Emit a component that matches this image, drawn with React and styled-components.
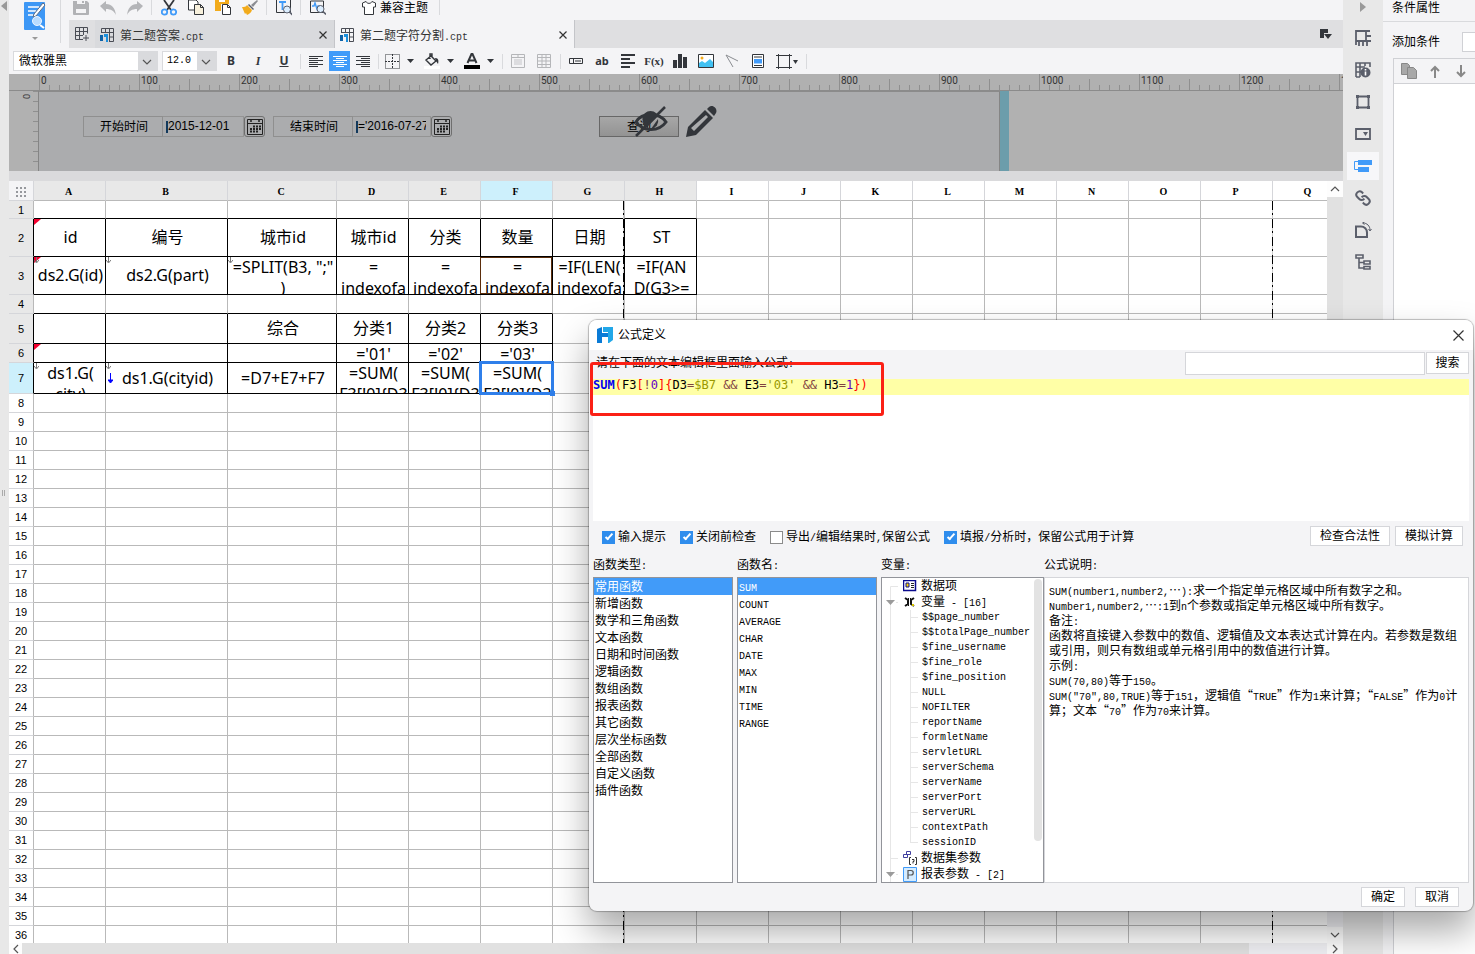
import React from "react";
import styled, { createGlobalStyle, css } from "styled-components";

const UI_FONT = `"Liberation Sans", "Noto Sans CJK SC", sans-serif`;
const CJK_FONT = `"Noto Sans CJK SC", sans-serif`;
const CELL_FONT = `"Noto Sans", "Noto Sans CJK SC", sans-serif`;
const MONO = `"Liberation Mono", "Noto Sans CJK SC", monospace`;
const INK = "#33363b";
const BLUE = "#419bf9";

const Global = createGlobalStyle`
  *, *::before, *::after { box-sizing: border-box; }
  body { margin: 0; font: 12px/16px ${UI_FONT}; color: #000; background: #f4f4f6; overflow: hidden; }
  button, input, select { font: inherit; color: inherit; margin: 0; }
  ul { list-style: none; margin: 0; padding: 0; }
  svg { display: block; }
`;

/* ---------- text helper: Latin runs use a half-width face ---------- */
const Latin = styled.span`
  font-family: ${MONO};
  font-size: 10px;
  line-height: 0;
  white-space: pre;
`;
const Mixed = ({ children }) =>
  String(children)
    .split(/([\x20-\x7e]+)/)
    .filter(Boolean)
    .map((part, i) => (/^[\x20-\x7e]/.test(part) ? <Latin key={i}>{part}</Latin> : part));

/* ---------- frame ---------- */
const Page = styled.div`
  display: flex;
  height: 100vh;
  position: relative;
  overflow: hidden;
`;
const Gutter = styled.aside`
  flex: 0 0 9px;
  background: #e8e8e8;
  display: flex;
  flex-direction: column;
  justify-content: space-between;
  padding-top: 1px;
`;
const GutterGrip = styled.div`
  width: 3px;
  height: 6px;
  margin: 0 0 458px 2px;
  border: solid #aaa;
  border-width: 0 1px;
`;
const Main = styled.main`
  flex: 1;
  min-width: 0;
  display: flex;
  flex-direction: column;
`;
const IconButton = styled.button`
  display: flex;
  align-items: center;
  justify-content: center;
  border: 0;
  padding: 0;
  flex: none;
  width: ${(p) => p.$w || 26}px;
  height: ${(p) => p.$h || 20}px;
  background: ${(p) => (p.$active ? BLUE : "transparent")};
  color: ${(p) => (p.$active ? "#fff" : INK)};
`;

/* ---------- top ---------- */
const Top = styled.header`
  display: flex;
  height: 48px;
  flex: none;
`;
const AppMenu = styled.button`
  width: 51px;
  height: 48px;
  border: 0;
  background: none;
  padding: 0;
  display: flex;
  flex-direction: column;
  align-items: center;
  gap: 7px;
`;
const TopRight = styled.div`
  flex: 1;
  min-width: 0;
  display: flex;
  flex-direction: column;
`;
const QuickBar = styled.div`
  display: flex;
  height: 20px;
  align-items: flex-start;
  padding-left: 6px;
`;
const Line = styled.span`
  flex: none;
  width: 1px;
  height: ${(p) => p.$h || 15}px;
  background: #d9dadd;
  margin: 0 ${(p) => p.$r || 0}px 0 ${(p) => p.$l || 0}px;
`;
const TopLine = styled(Line)`
  height: 43px;
`;
const ThemeButton = styled.button`
  display: flex;
  align-items: center;
  gap: 4px;
  height: 16px;
  border: 0;
  background: none;
  padding: 0;
  margin-left: 31px;
`;
const TabBar = styled.div`
  display: flex;
  height: 28px;
  margin-left: 8px;
  background: #dfdfe1;
  align-items: stretch;
`;
const Tab = styled.div`
  display: flex;
  align-items: center;
  width: 240px;
  gap: 6px;
  padding: 1px 5px 0;
  border-right: 1px solid #c4c5c9;
  color: #333;
  background: ${(p) => (p.$active ? "#f4f4f6" : "#d9dadd")};
`;
const TabName = styled.span`
  flex: 1;
  font-family: ${CJK_FONT};
`;
const TabMore = styled.div`
  margin: 0 10px 0 auto;
  display: flex;
  align-items: center;
`;

/* ---------- format bar ---------- */
const FormatBar = styled.div`
  display: flex;
  align-items: center;
  height: 26px;
  flex: none;
  padding-left: 4px;
`;
const SelectBox = styled.label`
  display: flex;
  position: relative;
  width: ${(p) => p.$w}px;
  height: 20px;
  margin-right: ${(p) => p.$r || 0}px;
  border: 1px solid #d9dadd;
  background: linear-gradient(#d9dadd, #d9dadd) right / 19px 100% no-repeat #fff;
  select {
    appearance: none;
    width: 100%;
    border: 0;
    background: none;
    padding: 0 20px 0 5px;
    outline: 0;
  }
  svg {
    position: absolute;
    right: 5px;
    top: 5px;
    pointer-events: none;
  }
`;
const SizeSelect = styled.select`
  && {
    font-family: ${MONO};
    font-size: 10px;
    padding-left: 4px;
  }
`;
const Groups = styled.div`
  display: flex;
  gap: 7px;
  margin: 0 2px 0 5px;
`;
const Group = styled.div`
  display: flex;
  gap: 3px;
`;
const Glyph = styled.span`
  font: ${(p) => p.$font};
  color: ${INK};
  text-decoration: ${(p) => (p.$under ? "underline" : "none")};
`;

/* ---------- parameter pane ---------- */
const Ruler = styled.div`
  display: flex;
  height: 17px;
  flex: none;
  padding-left: 30px;
  background: #b0b0b0;
  border-bottom: 1px solid #8b8b8b;
  overflow: hidden;
`;
const RulerScale = styled.div`
  display: flex;
  flex: 1;
  overflow: hidden;
  background:
    repeating-linear-gradient(90deg, #8f8f8f 0 1px, transparent 1px 100px) 0 0 / 100% 16px no-repeat,
    repeating-linear-gradient(90deg, #8f8f8f 0 1px, transparent 1px 50px) 0 5px / 100% 11px no-repeat,
    repeating-linear-gradient(90deg, #8f8f8f 0 1px, transparent 1px 10px) 0 11px / 100% 5px no-repeat;
`;
const RulerMark = styled.span`
  flex: 0 0 100px;
  padding-left: 2px;
  font: 10px/13px Roboto, sans-serif;
  color: #333;
`;
const ParamPane = styled.section`
  display: flex;
  height: 80px;
  flex: none;
  padding-left: 13px;
  background: #b1b1b1;
`;
const SideRuler = styled.div`
  width: 17px;
  border-right: 1px solid #858585;
  padding: 0 0 0 1px;
  font: 9px/8px Roboto, sans-serif;
  color: #333;
  background: repeating-linear-gradient(#8f8f8f 0 1px, transparent 1px 10px) right / 5px 100% no-repeat;
  span {
    display: block;
    width: 8px;
    transform: rotate(-90deg);
  }
`;
const ParamCanvas = styled.div`
  width: 961px;
  border-top: 1px solid #8b8b8b;
  border-right: 1px solid #858585;
  background: #abacae;
  padding: 24px 0 0 44px;
  display: flex;
  align-items: flex-start;
`;
const ParamLabel = styled.label`
  width: 80px;
  height: 21px;
  border: 1px solid #8f8f8f;
  text-align: center;
  line-height: 21px;
  padding-left: 2px;
`;
const ParamInput = styled.input`
  width: ${(p) => p.$w}px;
  height: 21px;
  border: 1px solid #949494;
  border-left: 0;
  background: linear-gradient(#12395c, #12395c) 3px 4px / 2px 12px no-repeat #abacae;
  padding: 0 4px 2px 5px;
  outline: 0;
`;
const CalendarButton = styled(IconButton)`
  border: 1px solid #6f6f6f;
  border-radius: 3px;
  margin-right: 8px;
`;
const QueryButton = styled.button`
  position: relative;
  width: 80px;
  height: 21px;
  margin: 0 7px 0 139px;
  padding: 0;
  border: 1px solid #676767;
  background: linear-gradient(#a7a7a7, #939393);
  svg {
    position: absolute;
    left: 34px;
    top: -11px;
  }
`;
const Pencil = styled.button`
  border: 0;
  padding: 0;
  background: none;
  margin-top: -10px;
`;
const Handle = styled.div`
  width: 9px;
  background: #6c9dab;
`;
const Divider = styled.div`
  height: 10px;
  flex: none;
  background: #dadadc;
`;

/* ---------- sheet ---------- */
const SheetRow = styled.section`
  display: flex;
  flex: 1;
  min-height: 0;
`;
const SheetView = styled.div`
  position: relative;
  flex: 1;
  min-width: 0;
  overflow: hidden;
  background: #fff;
`;
const Sheet = styled.table`
  table-layout: fixed;
  width: 1336px;
  border-collapse: separate;
  border-spacing: 0;
`;
const headTone = (p) => (p.$tone === "hot" ? "#cdf0fc" : p.$tone === "used" ? "#e8e8e8" : "#fff");
const ColHead = styled.th`
  height: 20px;
  padding: 2px 2px 0 0;
  border-right: 1px solid #d5d6da;
  border-bottom: 1px solid #b9b9b9;
  background: ${headTone};
  font: 10px/16px "Liberation Serif", serif;
  font-weight: 700;
`;
const Corner = styled.th`
  padding: 3px 0 0;
  background: #f4f4f6;
  border-bottom: 1px solid #d5d6da;
  border-right: 1px solid #d5d6da;
  svg {
    margin: 0 auto;
  }
`;
const RowHead = styled.th`
  height: ${(p) => p.$h}px;
  padding: 0;
  background: ${headTone};
  border-right: 1px solid ${(p) => (p.$dark ? "#000" : "#b9b9b9")};
  border-bottom: 1px solid #d5d6da;
  font: 11px/16px "Liberation Sans", sans-serif;
`;
const Cell = styled.td`
  position: relative;
  padding: 0;
  border-right: 1px solid ${(p) => (p.$r ? "#000" : "#b9b9b9")};
  border-bottom: 1px solid ${(p) => (p.$b ? "#000" : "#b9b9b9")};
`;
const CellText = styled.div`
  height: ${(p) => p.$h}px;
  padding-left: 2px;
  overflow: hidden;
  display: flex;
  flex-direction: column;
  align-items: center;
  justify-content: safe center;
  white-space: pre;
  font: 16px/21px ${CELL_FONT};
`;
const Mark = styled.svg`
  position: absolute;
  left: ${(p) => p.$x || 0}px;
  top: ${(p) => p.$y || 0}px;
`;
const Selection = styled.div`
  position: absolute;
  z-index: 1;
  inset: -2px;
  ${(p) =>
    p.$ref
      ? css`
          inset: 0 0 0 -1px;
          border: 1px solid #5b2d0b;
        `
      : css`
          border: 3px solid #2f7fea;
          &::after {
            content: "";
            position: absolute;
            right: -4px;
            bottom: -4px;
            width: 5px;
            height: 5px;
            background: #2f7fea;
          }
        `}
`;
const PageBreak = styled.div`
  position: absolute;
  top: 20px;
  bottom: 0;
  left: ${(p) => p.$x}px;
  width: 1px;
  background: repeating-linear-gradient(#000 0 9px, #ccc 9px 12px, #000 12px 14px, #ccc 14px 18px);
`;
const VScroll = styled.div`
  width: 16px;
  flex: none;
  display: flex;
  flex-direction: column;
  background: #f0f0f4;
`;
const HScroll = styled.div`
  height: 11px;
  flex: none;
  display: flex;
  background: #f0f0f4;
`;
const Thumb = styled.div`
  background: #e1e1e1;
  flex: ${(p) => p.$grow};
`;
const ScrollButton = styled.button`
  border: 0;
  padding: 0;
  background: #fdfdfd;
  display: flex;
  align-items: center;
  justify-content: center;
  flex: 0 0 ${(p) => p.$size || 16}px;
`;
const Space = styled.div`
  flex: ${(p) => p.$grow};
`;

/* ---------- right side ---------- */
const Rail = styled.nav`
  flex: 0 0 40px;
  background: #e8e8e8;
  display: flex;
  flex-direction: column;
  align-items: center;
  gap: 4px;
`;
const RailToggle = styled(IconButton)`
  height: 14px;
  margin-bottom: 6px;
`;
const RailButton = styled.button`
  display: flex;
  align-items: center;
  justify-content: center;
  width: 32px;
  height: 28px;
  flex: none;
  border: 0;
  padding: 0;
  color: #5b5f6b;
  background: ${(p) => (p.$active ? "#f7f7f9" : "transparent")};
`;
const Props = styled.aside`
  flex: 0 0 92px;
  display: flex;
  flex-direction: column;
  overflow: hidden;
`;
const PropsTitle = styled.h2`
  margin: 0;
  height: 22px;
  padding-left: 9px;
  border-bottom: 1px solid #d9dadd;
  font-size: 12px;
  font-weight: 400;
  line-height: 17px;
`;
const AddRow = styled.div`
  display: flex;
  align-items: center;
  height: 36px;
  padding: 4px 0 0 9px;
  white-space: nowrap;
`;
const AddButton = styled.button`
  flex: 0 0 40px;
  height: 20px;
  margin-left: 22px;
  border: 1px solid #d0d1d5;
  background: #fff;
`;
const CondBox = styled.div`
  flex: 1;
  margin-left: 10px;
  border: solid #d0d1d5;
  border-width: 1px 0 0 1px;
  background: #fff;
`;
const CondTools = styled.div`
  display: flex;
  height: 25px;
  align-items: center;
  background: #f4f4f6;
  border-bottom: 1px solid #d0d1d5;
  padding-left: 2px;
`;

/* ---------- dialog ---------- */
const Dialog = styled.div`
  position: absolute;
  z-index: 5;
  left: 589px;
  right: 2px;
  top: 320px;
  border-radius: 8px;
  background: #f4f4f6;
  box-shadow: 0 0 1px 1px rgba(0, 0, 0, 0.25), 0 20px 36px rgba(0, 0, 0, 0.34);
`;
const DialogTitle = styled.div`
  display: flex;
  align-items: center;
  gap: 5px;
  height: 30px;
  padding: 0 9px 0 8px;
  border-radius: 8px 8px 0 0;
  background: #fff;
  h1 {
    flex: 1;
    margin: 0;
    font-size: 12px;
    font-weight: 400;
  }
`;
const Prompt = styled.div`
  display: flex;
  align-items: flex-start;
  height: 29px;
  padding: 2px 4px 0 7px;
  gap: 1px;
  label {
    flex: 1;
    line-height: 23px;
  }
`;
const SearchInput = styled.input`
  width: 240px;
  height: 23px;
  border: 1px solid #d5d6da;
  background: #fff;
  outline: 0;
`;
const PlainButton = styled.button`
  height: ${(p) => p.$h || 20}px;
  width: ${(p) => p.$w}px;
  padding: 0;
  border: 1px solid #d5d6da;
  background: #fff;
  line-height: 18px;
`;
const Editor = styled.div`
  height: 142px;
  margin: 0 4px;
  background: #fff;
`;
const CodeLine = styled.code`
  display: block;
  height: 16px;
  background: #ffffa6;
  font: 12px/13px "DejaVu Sans Mono", monospace;
  white-space: pre;
`;
const Tok = styled.span`
  color: ${(p) => p.$c};
  font-weight: ${(p) => (p.$bold ? 700 : 400)};
`;
const Highlight = styled.div`
  position: absolute;
  left: 1px;
  top: 42px;
  width: 294px;
  height: 54px;
  border: 3px solid #fb2015;
  border-radius: 3px;
  pointer-events: none;
`;
const Options = styled.div`
  display: flex;
  align-items: center;
  gap: 14px;
  height: 32px;
  padding: 0 10px 0 13px;
`;
const Check = styled.label`
  display: flex;
  align-items: center;
  gap: 3px;
  white-space: nowrap;
  input {
    appearance: none;
    width: 13px;
    height: 13px;
    border: 1px solid #8b8b8b;
    background: #fff;
  }
  input:checked {
    border-color: #2f8ded;
    background: #2f8ded;
  }
  input:checked::before {
    content: "";
    display: block;
    width: 8px;
    height: 4px;
    margin: 2px 0 0 2px;
    border: solid #fff;
    border-width: 0 0 2px 2px;
    transform: rotate(-48deg);
  }
`;
const ButtonPair = styled.div`
  display: flex;
  gap: 5px;
  margin: -2px 0 0 auto;
`;
const Columns = styled.div`
  display: flex;
  padding: 0 4px;
`;
const Column = styled.section`
  flex: ${(p) => (p.$w ? `0 0 ${p.$w}px` : "1")};
  min-width: 0;
  margin-right: ${(p) => p.$r || 0}px;
  h2 {
    margin: 0;
    height: 24px;
    font-size: 12px;
    font-weight: 400;
    line-height: 25px;
  }
`;
const Box = styled.div`
  position: relative;
  height: 306px;
  overflow: hidden;
  background: #fff;
  border: 1px solid ${(p) => (p.$soft ? "#d5d6da" : "#92949a")};
`;
const Option = styled.li`
  height: 17px;
  padding-left: 1px;
  line-height: 18px;
  color: ${(p) => (p.$on ? "#fff" : "#000")};
  background: ${(p) => (p.$on ? BLUE : "transparent")};
`;
const TreeRow = styled.li`
  display: flex;
  align-items: center;
  height: 16px;
  white-space: nowrap;
  padding-left: 3px;
  svg {
    flex: none;
  }
`;
const Leaf = styled(TreeRow)`
  height: 15px;
  padding-left: 40px;
  background:
    linear-gradient(#e6e6e6, #e6e6e6) 8px 0 / 1px 100% no-repeat,
    linear-gradient(#e6e6e6, #e6e6e6) 28px 0 / 1px ${(p) => (p.$last ? "50%" : "100%")} no-repeat,
    linear-gradient(#e6e6e6, #e6e6e6) 28px 7px / 8px 1px no-repeat;
`;
const Twisty = styled.svg`
  margin-right: 5px;
`;
const NodeIcon = styled.svg`
  margin-right: 4px;
`;
const TreeThumb = styled.div`
  position: absolute;
  right: 1px;
  top: 1px;
  width: 8px;
  height: 262px;
  border-radius: 4px;
  background: #e3e3e3;
`;
const Help = styled.div`
  padding: 4px 0 0 4px;
  font-family: ${CJK_FONT};
  line-height: 15px;
  white-space: pre;
`;
const Footer = styled.div`
  display: flex;
  justify-content: flex-end;
  align-items: center;
  gap: 10px;
  height: 28px;
  padding-right: 14px;
`;

/* ---------- icons ---------- */
const Svg = ({ w = 16, h = 16, children, ...rest }) => (
  <svg width={w} height={h} viewBox={`0 0 ${w} ${h}`} fill="none" stroke="currentColor" aria-hidden="true" {...rest}>
    {children}
  </svg>
);
const Chevron = ({ d = "M1 3l4 4 4-4" }) => (
  <Svg w={10} h={10} stroke="#555">
    <path d={d} strokeWidth="1.2" />
  </Svg>
);
const Triangle = ({ w = 8, h = 5, d = "M0 0h8L4 5z", color = INK }) => (
  <Svg w={w} h={h} stroke="none" fill={color}>
    <path d={d} />
  </Svg>
);
const Cross = ({ size = 9 }) => (
  <Svg w={size} h={size} stroke="#333">
    <path d={`M.5 .5L${size - 0.5} ${size - 0.5}M${size - 0.5} .5L.5 ${size - 0.5}`} strokeWidth="1.2" />
  </Svg>
);
const Magnifier = ({ x, y }) => (
  <g stroke="#5b5f6b" fill="#dceeff">
    <circle cx={x} cy={y} r="3.5" />
    <path d={`M${x + 2.5} ${y + 2.5}l3 3`} strokeWidth="1.6" />
  </g>
);
const CptIcon = () => (
  <Svg w={14} h={14} stroke="#4a4d55">
    <path d="M1.500 5V.5h12v13H9M1.500 4.500h12M5.500 .5v4M9.500 .5v13M9.500 9h4" />
    <path d="M0 7h3v6H0z" fill="#0c62a8" stroke="none" />
    <path d="M4 6h4v8H6V9H4z" fill="#1b8fdc" stroke="none" />
  </Svg>
);
const AppIcon = () => (
  <Svg w={22} h={30} stroke="none">
    <path d="M2 2h18a1 1 0 011 1v26a1 1 0 01-1 1H1a1 1 0 01-1-1V3a1 1 0 011-1z" fill="#3d97f5" />
    <path d="M4 7h11M4 11h8M4 15h5" stroke="#fff" strokeWidth="1.6" />
    <path d="M10 14L19 3l2 2-9 11-3 1z" fill="#fff" stroke="#5f6f88" />
    <circle cx="13" cy="21" r="4.5" fill="#b9dcff" stroke="#eef6ff" />
    <path d="M16 25l4 3" stroke="#fff" strokeWidth="2" />
  </Svg>
);
const AlignIcon = ({ rows }) => (
  <Svg w={14} h={13}>
    {rows.map(([x, len], i) => (
      <path key={i} d={`M${x} ${i * 2 + 1.5}h${len}`} />
    ))}
  </Svg>
);
const CalendarIcon = () => (
  <Svg w={16} h={17} stroke="#222">
    <path d="M.5 1.500h15v15H.5zM.5 5.500h15" />
    <path d="M3 3h2M11 3h2" strokeWidth="1.5" />
    <path d="M6 8.500h2M9 8.500h2M12 8.500h2M3 11h2M6 11h2M9 11h2M12 11h2M3 13.500h2M6 13.500h2M9 13.500h2" strokeWidth="2" />
  </Svg>
);

const QUICK = [
  { name: "保存", icon: <Svg w={16} h={15} stroke="none"><path d="M0 0h14l2 2v11a1 1 0 01-1 1H1a1 1 0 01-1-1z" fill="#b1b2b5" /><path d="M4 0h8v3H4zM3 8h10v4H3z" fill="#f4f4f6" /><path d="M9 0h2v2H9z" fill="#b1b2b5" /></Svg> },
  { name: "撤销", icon: <Svg w={16} h={15} stroke="none"><path d="M0 5l6-5v3c6 0 9 4 10 11-2-4-5-6-10-6v3z" fill="#b4b5b8" /></Svg> },
  { name: "重做", icon: <Svg w={16} h={15} stroke="none"><path d="M16 5l-6-5v3C4 3 1 7 0 14c2-4 5-6 10-6v3z" fill="#b4b5b8" /></Svg>, line: true },
  { name: "剪切", icon: <Svg w={16} h={16} stroke={INK}><path d="M3 0l7 10M13 0L6 10" strokeWidth="1.8" /><circle cx="3.500" cy="12" r="2.700" stroke={BLUE} strokeWidth="1.8" /><circle cx="12.500" cy="12" r="2.700" stroke={BLUE} strokeWidth="1.8" /></Svg> },
  { name: "复制", icon: <Svg w={16} h={16} stroke={INK}><path d="M6 10H.5V0H8l2 2v2" fill="#fff" /><path d="M6.500 4.500h6l3 3v7h-9z" fill="#f7f0dc" /><path d="M12.500 4.500v3h3" /></Svg> },
  { name: "粘贴", icon: <Svg w={16} h={16} stroke={INK}><path d="M0 0h14v4H6v7H0z" fill="#f2ab1c" stroke="none" /><path d="M4 0h6v2H4z" fill="#fff" stroke="none" /><path d="M7.500 4.500h5l3 3v7h-8z" fill="#fff" /><path d="M12.500 4.500v3h3" /></Svg> },
  { name: "格式刷", icon: <Svg w={16} h={16} stroke="none"><path d="M15 0L9 5l2 2 5-6z" fill="#8b8d92" /><path d="M7 4l5 5-1 1-5-5z" fill="#5b5f6b" /><path d="M5 5l5 5c-1 3-3 4-5 5l-1-2-1 1-3-7c2 0 4 0 5-2z" fill="#f2ab1c" /></Svg>, line: true },
  { name: "查找", icon: <Svg w={16} h={16} stroke={INK}><path d="M.5 0v12.500h14V0" /><path d="M3 2h7M6.500 2v8" stroke={BLUE} strokeWidth="1.800" /><Magnifier x={11} y={9.5} /></Svg>, line: true },
  { name: "性能分析", icon: <Svg w={16} h={16} stroke={INK}><path d="M.5 1v11.500h13V1z" /><path d="M2 6h2l1-3 2 6 1-3h2" stroke={BLUE} strokeWidth="1.400" /><Magnifier x={10.5} y={9} /></Svg> },
];

const LEFT_ROWS = [[0, 14], [0, 9], [0, 14], [0, 9], [0, 14], [0, 9]];
const CENTER_ROWS = [[0, 14], [3, 8], [0, 14], [3, 8], [0, 14], [3, 8]];
const RIGHT_ROWS = [[0, 14], [5, 9], [0, 14], [5, 9], [0, 14], [5, 9]];
const INSERT = [
  ["文本框", <Svg w={14} h={6}><path d="M.5 .5h13v5H.5zM4.500 .5v5M6 3h6" /></Svg>],
  ["标签", <Glyph $font='bold 11px/14px "Noto Sans", sans-serif'>ab</Glyph>],
  ["富文本", <Svg w={14} h={14}><path d="M0 1h14M0 5h9M0 9h14M0 13h9" strokeWidth="2" /></Svg>],
  ["公式", <Glyph $font='bold 11px/16px "Liberation Serif", serif'>F(x)</Glyph>],
  ["图表", <Svg w={14} h={14} stroke="none" fill={INK}><path d="M0 6h4v8H0zM5 0h4v14H5zM10 3h4v11h-4z" /></Svg>],
  ["图片", <Svg w={16} h={14} stroke={INK}><path d="M.5 .5h15v13H.5z" fill="#fff" /><circle cx="4" cy="4" r="1.500" fill="#f2ab1c" stroke="none" /><path d="M1 9l3-2 3 2 5-4 3 3v5H1z" fill="#41c1f2" stroke="none" /></Svg>],
  ["斜线", <Svg w={14} h={14} stroke="#8a8c91"><path d="M1 1l12 6M1 1l7 12" /></Svg>],
  ["子报表", <Svg w={12} h={14} stroke={INK}><path d="M.5 .5h11v13H.5z" fill="#fff" /><path d="M2 3h8M2 11.500h8" /><path d="M2 5h8v4.500H2z" fill={BLUE} stroke="none" /></Svg>],
];

const RAIL = [
  ["单元格元素", <Svg w={16} h={16} strokeWidth="1.8"><path d="M1 15V1h14M11 1v10H1M11 6h5M11 11h5M4 11v5M8 11v5M12 12v4" /></Svg>],
  ["单元格属性", <Svg w={16} h={16} strokeWidth="1.6"><path d="M1 15V1h14v4M1 5h9M5 1v14M10 1v3M1 10h5M1 15h4" /><circle cx="10.500" cy="10.500" r="5" fill="currentColor" stroke="none" /><path d="M10.500 7v1.500M10.500 9.500v4" stroke="#fff" /></Svg>],
  ["悬浮元素", <Svg w={16} h={16} strokeWidth="1.8"><path d="M2.500 2.500h11v11h-11z" /><path d="M1 1h3v3H1zM12 1h3v3h-3zM1 12h3v3H1zM12 12h3v3h-3z" fill="currentColor" stroke="none" /></Svg>],
  ["控件设置", <Svg w={16} h={12} strokeWidth="1.8"><path d="M1 1h14v10H1z" /><path d="M8 4h5l-2.500 4z" fill="currentColor" stroke="none" /></Svg>],
  ["条件属性", <Svg w={18} h={14} stroke={BLUE}><path d="M4 2.500H.5v8H4" /><path d="M4 1h14v5H4zM4 8h11v5H4z" fill={BLUE} stroke="none" /></Svg>],
  ["超级链接", <Svg w={16} h={16}><g transform="translate(16 0) scale(-.667 .667)" strokeWidth="3"><path d="M10 13a5 5 0 0 0 7.540.540l3-3a5 5 0 0 0-7.070-7.070l-1.720 1.710" /><path d="M14 11a5 5 0 0 0-7.540-.540l-3 3a5 5 0 0 0 7.070 7.070l1.710-1.710" /></g></Svg>],
  ["组件旋转", <Svg w={18} h={16}><path d="M2 15V4.500h5a6 6 0 016 6V15z" strokeWidth="2" /><path d="M9 1c4 0 7 3 7 7M14.500 7l1.500 2 1.500-2M10.500 0L8.500 1l2 1.500" /></Svg>],
  ["权限结构", <Svg w={16} h={16} strokeWidth="1.6"><path d="M1 1h7v3H1zM9 7h6v3H9zM9 12.500h6V15H9zM4 4v10h5M4 8.500h5" /></Svg>],
];

/* ---------- data ---------- */
const COLS = [72, 122, 109, ...Array(14).fill(72)];
const LETTERS = "ABCDEFGHIJKLMNOPQ".split("");
const ROW_H = { 1: 18, 2: 38, 3: 38, 5: 30, 7: 31 };
const BOXED = { 2: 8, 3: 8, 5: 6, 6: 6, 7: 6 };
const BOTTOM = { 1: 8, 2: 8, 3: 8, 4: 6, 5: 6, 6: 6, 7: 6 };
const DATA = {
  A2: "id", B2: "编号", C2: "城市id", D2: "城市id", E2: "分类", F2: "数量", G2: "日期", H2: "ST",
  A3: "ds2.G(id)", B3: "ds2.G(part)", C3: '=SPLIT(B3, ";"\n)', D3: "=\nindexofa", E3: "=\nindexofa", F3: "=\nindexofa",
  G3: "=IF(LEN(\nindexofa", H3: "=IF(AN\nD(G3>=",
  C5: "综合", D5: "分类1", E5: "分类2", F5: "分类3",
  D6: "='01'", E6: "='02'", F6: "='03'",
  A7: "ds1.G(\ncity)", B7: "ds1.G(cityid)", C7: "=D7+E7+F7",
  D7: "=SUM(\nF3[!0]{D3", E7: "=SUM(\nF3[!0]{D3", F7: "=SUM(\nF3[!0]{D3",
};
const RED = ["A2", "A3", "A6"];
const DOWN = ["A3", "B3", "C3", "A7", "B7"];

const TYPES = ["常用函数", "新增函数", "数学和三角函数", "文本函数", "日期和时间函数", "逻辑函数", "数组函数", "报表函数", "其它函数", "层次坐标函数", "全部函数", "自定义函数", "插件函数"];
const NAMES = ["SUM", "COUNT", "AVERAGE", "CHAR", "DATE", "MAX", "MIN", "TIME", "RANGE"];
const VARS = ["$$page_number", "$$totalPage_number", "$fine_username", "$fine_role", "$fine_position", "NULL", "NOFILTER", "reportName", "formletName", "servletURL", "serverSchema", "serverName", "serverPort", "serverURL", "contextPath", "sessionID"];
const HELP = [
  "SUM(number1,number2,…):求一个指定单元格区域中所有数字之和。",
  "Number1,number2,…:1到n个参数或指定单元格区域中所有数字。",
  "备注:",
  "函数将直接键入参数中的数值、逻辑值及文本表达式计算在内。若参数是数组",
  "或引用，则只有数组或单元格引用中的数值进行计算。",
  "示例:",
  "SUM(70,80)等于150。",
  "SUM(\"70\",80,TRUE)等于151，逻辑值“TRUE”作为1来计算；“FALSE”作为0计",
  "算；文本“70”作为70来计算。",
];
const CODE = [
  ["SUM", "#0000f0", true], ["(", "#f00"], ["F3", "#000"], ["[", "#f00"], ["!", "#804040"], ["0", "#6400c8"], ["]{", "#f00"],
  ["D3", "#000"], ["=", "#804040"], ["$B7", "#999900"], [" && ", "#804040"], ["E3", "#000"], ["=", "#804040"], ["'03'", "#999900"],
  [" && ", "#804040"], ["H3", "#000"], ["=", "#804040"], ["1", "#6400c8"], ["})", "#f00"],
];

function SheetCell({ id, row, col, h }) {
  return (
    <Cell $r={col < (BOXED[row] || 0)} $b={col < (BOTTOM[row] || 0)}>
      {DATA[id] && <CellText $h={h - 1}>{DATA[id].split("\n").map((t, i) => <span key={i}>{t}</span>)}</CellText>}
      {RED.includes(id) && <Mark width="7" height="7"><path d="M0 0h7L0 6z" fill="#f5002f" /></Mark>}
      {DOWN.includes(id) && <Mark width="5" height="7"><path d="M2.500 0v5M0 3l2.500 3L5 3" stroke="#777" fill="none" /></Mark>}
      {id === "B7" && <Mark $x={2} $y={10} width="5" height="11"><path d="M2.500 0v9M0 7l2.500 3L5 7z" stroke="#00f" fill="#00f" /></Mark>}
      {id === "F3" && <Selection $ref />}
      {id === "F7" && <Selection />}
    </Cell>
  );
}

function SheetTable() {
  return (
    <Sheet>
      <colgroup>
        <col style={{ width: 25 }} />
        {COLS.map((w, i) => <col key={i} style={{ width: w }} />)}
      </colgroup>
      <thead>
        <tr>
          <Corner>
            <Svg w={10} h={10} stroke="none" fill="#96989d">
              {[0, 4, 8].map((x) => [0, 4, 8].map((y) => <path key={`${x}${y}`} d={`M${x} ${y}h2v2h-2z`} />))}
            </Svg>
          </Corner>
          {LETTERS.map((l, i) => <ColHead key={l} $tone={l === "F" ? "hot" : i < 8 ? "used" : ""}>{l}</ColHead>)}
        </tr>
      </thead>
      <tbody>
        {Array.from({ length: 36 }, (_, k) => k + 1).map((r) => {
          const h = ROW_H[r] || 19;
          return (
            <tr key={r}>
              <RowHead $h={h} $dark={!!BOXED[r]} $tone={r === 7 ? "hot" : r < 7 ? "used" : ""}>{r}</RowHead>
              {LETTERS.map((l, c) => <SheetCell key={l} id={l + r} row={r} col={c} h={h} />)}
            </tr>
          );
        })}
      </tbody>
    </Sheet>
  );
}

function FormulaDialog() {
  return (
    <Dialog role="dialog" aria-labelledby="dlg-title">
      <DialogTitle>
        <Svg w={16} h={16} stroke="none">
          <path d="M0 2l5-2v6h4v4H5v6H0z" fill="#0a7bd6" />
          <path d="M6 0h10v13l-4 3h-1V5H6z" fill="#22a7e8" />
          <path d="M9 6h2v4H9z" fill="#0a7bd6" />
        </Svg>
        <h1 id="dlg-title">公式定义</h1>
        <IconButton $w={12} aria-label="关闭"><Cross size={11} /></IconButton>
      </DialogTitle>
      <Prompt>
        <label htmlFor="fn-search"><Mixed>请在下面的文本编辑框里面输入公式:</Mixed></label>
        <SearchInput id="fn-search" />
        <PlainButton $w={43} $h={22}>搜索</PlainButton>
      </Prompt>
      <Editor role="textbox" aria-label="公式" aria-multiline="true" tabIndex={0}>
        <CodeLine>{CODE.map(([t, c, b], i) => <Tok key={i} $c={c} $bold={b}>{t}</Tok>)}</CodeLine>
      </Editor>
      <Options>
        {[["输入提示", true], ["关闭前检查", true], ["导出/编辑结果时,保留公式", false], ["填报/分析时，保留公式用于计算", true]].map(([t, on]) => (
          <Check key={t}><input type="checkbox" defaultChecked={on} /><span><Mixed>{t}</Mixed></span></Check>
        ))}
        <ButtonPair>
          <PlainButton $w={80}>检查合法性</PlainButton>
          <PlainButton $w={68}>模拟计算</PlainButton>
        </ButtonPair>
      </Options>
      <Columns>
        <Column $w={140} $r={4}>
          <h2><Mixed>函数类型:</Mixed></h2>
          <Box as="ul" role="listbox" aria-label="函数类型">
            {TYPES.map((t, i) => <Option key={t} role="option" aria-selected={!i} $on={!i}>{t}</Option>)}
          </Box>
        </Column>
        <Column $w={140} $r={4}>
          <h2><Mixed>函数名:</Mixed></h2>
          <Box as="ul" role="listbox" aria-label="函数名">
            {NAMES.map((t, i) => <Option key={t} role="option" aria-selected={!i} $on={!i}><Mixed>{t}</Mixed></Option>)}
          </Box>
        </Column>
        <Column $w={163}>
          <h2><Mixed>变量:</Mixed></h2>
          <Box>
            <ul>
              <TreeRow>
                <Twisty width="13" height="16"><path d="M5.500 16V8.500H13" stroke="#e6e6e6" fill="none" /></Twisty>
                <NodeIcon width="14" height="12"><path d="M.5 .5h12v10H.5z" fill="#fff" stroke="#0a0a8c" strokeWidth="1.500" /><path d="M3 3h3v4H3z" fill="#ffd800" stroke="#0a0a8c" /><path d="M8 3.500h3M8 5.500h3M8 7.500h3" stroke="#222" /></NodeIcon>
                数据项
              </TreeRow>
              <TreeRow>
                <Twisty width="13" height="16"><path d="M5.500 0v16M11 8.500h2" stroke="#e6e6e6" /><path d="M1 6h9L5.500 11z" fill="#9b9b9b" /></Twisty>
                <NodeIcon width="14" height="12"><path d="M2 2l3 2v4l-3 2M11 2L8 4v4l3 2M5 3h1M7 3h1M5 9h1" stroke="#111" strokeWidth="2" fill="none" /><path d="M9 8h2v2H9z" fill="#d7c400" /></NodeIcon>
                <span><Mixed>{"变量 - [16]"}</Mixed></span>
              </TreeRow>
              {VARS.map((v, i) => <Leaf key={v} $last={i === VARS.length - 1}><Mixed>{v}</Mixed></Leaf>)}
              <TreeRow>
                <Twisty width="13" height="16"><path d="M5.500 0v16M5 8.500h8" stroke="#e6e6e6" /></Twisty>
                <NodeIcon width="14" height="16"><path d="M3.500 1.500h4v3h-4zM.5 4.500h4v3h-4z" fill="#fff" stroke="#4040a0" /><path d="M8 7.500H6.500v7H8M12 7.500h1.500v7H12M9 9.500h2v2H10v2" stroke="#333" fill="none" /></NodeIcon>
                数据集参数
              </TreeRow>
              <TreeRow>
                <Twisty width="13" height="16"><path d="M5.500 0v16M11 8.500h2" stroke="#e6e6e6" /><path d="M1 6h9L5.500 11z" fill="#9b9b9b" /></Twisty>
                <NodeIcon width="14" height="15"><path d="M.5 .5h13v14H.5z" fill="#d5ecff" stroke={BLUE} /><path d="M5 12V3.500h3a2 2 0 010 4.500H5" stroke="#555" strokeWidth="1.200" fill="none" /></NodeIcon>
                <span><Mixed>{"报表参数 - [2]"}</Mixed></span>
              </TreeRow>
            </ul>
            <TreeThumb />
          </Box>
        </Column>
        <Column>
          <h2><Mixed>公式说明:</Mixed></h2>
          <Box $soft>
            <Help lang="zh-CN">{HELP.map((t) => <div key={t}><Mixed>{t}</Mixed></div>)}</Help>
          </Box>
        </Column>
      </Columns>
      <Footer>
        <PlainButton $w={44}>确定</PlainButton>
        <PlainButton $w={44}>取消</PlainButton>
      </Footer>
      <Highlight />
    </Dialog>
  );
}

export default function App() {
  return (
    <Page lang="zh-CN">
      <Global />
      <Gutter>
        <Triangle w={7} h={10} d="M7 0v10L1 5z" color="#999" />
        <GutterGrip />
      </Gutter>
      <Main>
        <Top>
          <AppMenu aria-label="菜单"><AppIcon /><Triangle w={6} h={3} d="M0 0h6L3 3z" color="#999" /></AppMenu>
          <TopLine />
          <TopRight>
            <QuickBar>
              {QUICK.map((q) => (
                <React.Fragment key={q.name}>
                  <IconButton $w={27} $h={16} aria-label={q.name}>{q.icon}</IconButton>
                  {q.line && <Line $l={3} $r={3} />}
                </React.Fragment>
              ))}
              <ThemeButton>
                <Svg w={14} h={14} stroke={INK}><path d="M4 .5L.5 2v4h2v7.500h9V6h2V2L10 .5C9 3 5 3 4 .5z" fill="#fff" /></Svg>
                兼容主题
              </ThemeButton>
              <Line $l={11} />
            </QuickBar>
            <TabBar>
              <IconButton $w={26} $h={28} aria-label="新建">
                <Svg w={14} h={14} stroke="#4a4d55"><path d="M8 12.500H.5V.5h12v6M.5 4.500h12M.5 8.500H8M4.500 .5v12M8.500 .5V8M11 8v6M8 11h6" /></Svg>
              </IconButton>
              <Tab><CptIcon /><TabName><Mixed>第二题答案.cpt</Mixed></TabName><IconButton $w={12} aria-label="关闭"><Cross size={8} /></IconButton></Tab>
              <Tab $active><CptIcon /><TabName><Mixed>第二题字符分割.cpt</Mixed></TabName><IconButton $w={12} aria-label="关闭"><Cross size={8} /></IconButton></Tab>
              <TabMore>
                <IconButton $w={14} aria-label="更多"><Svg w={12} h={10} stroke="none" fill={INK}><path d="M0 0h8v4H4v5H0zM4 5h8L8 10z" /></Svg></IconButton>
              </TabMore>
            </TabBar>
          </TopRight>
        </Top>

        <FormatBar>
          <SelectBox $w={145} $r={4}><select aria-label="字体"><option>微软雅黑</option></select><Chevron /></SelectBox>
          <SelectBox $w={55}><SizeSelect aria-label="字号"><option>12.0</option></SizeSelect><Chevron /></SelectBox>
          <IconButton $w={28} aria-label="粗体"><Glyph $font='bold 12px/16px "Noto Sans", sans-serif'>B</Glyph></IconButton>
          <IconButton aria-label="斜体"><Glyph $font='italic bold 12px/16px "Liberation Serif", serif'>I</Glyph></IconButton>
          <IconButton aria-label="下划线"><Glyph $under $font='bold 12px/16px "Noto Sans", sans-serif'>U</Glyph></IconButton>
          <Line $l={3} $r={2} />
          <IconButton aria-label="左对齐"><AlignIcon rows={LEFT_ROWS} /></IconButton>
          <IconButton $w={21} $active aria-label="居中"><AlignIcon rows={CENTER_ROWS} /></IconButton>
          <IconButton $w={25} aria-label="右对齐"><AlignIcon rows={RIGHT_ROWS} /></IconButton>
          <Line $l={3} $r={0} />
          <Groups>
            <Group>
              <IconButton $w={16} aria-label="边框"><Svg w={15} h={15}><path d="M.5 .5h14v14H.5z" strokeDasharray="1 1" /><path d="M7.500 0v15M0 7.500h15" strokeDasharray="2 1" /></Svg></IconButton>
              <IconButton $w={14} aria-label="边框选项"><Triangle w={7} h={4} d="M0 0h7L3.500 4z" /></IconButton>
            </Group>
            <Group>
              <IconButton $w={16} aria-label="填充"><Svg w={16} h={16}><path d="M0 13h16v3H0z" fill="#fff" stroke="none" /><path d="M7 3l5 5-5 4-5-5zM6 6V1h2v3" strokeWidth="1.400" /><path d="M11 5c3 0 4 2 3 6l-2-3z" fill={INK} stroke="none" /></Svg></IconButton>
              <IconButton $w={14} aria-label="填充选项"><Triangle w={7} h={4} d="M0 0h7L3.500 4z" /></IconButton>
            </Group>
            <Group>
              <IconButton $w={16} aria-label="字体颜色"><Svg w={16} h={16}><path d="M0 12h16v4H0z" fill="#000" stroke="none" /><path d="M3.500 10L7.500 1h1l4 9M5 7.500h6" strokeWidth="2" /></Svg></IconButton>
              <IconButton $w={14} aria-label="颜色选项"><Triangle w={7} h={4} d="M0 0h7L3.500 4z" /></IconButton>
            </Group>
          </Groups>
          <Line $l={3} $r={2} />
          <IconButton aria-label="合并单元格"><Svg w={14} h={14} stroke="#b5b6b9"><path d="M.5 .5h13v13H.5zM.5 3.500h13M7 .5v3" /><path d="M3 5h8v6H3z" fill="#dcdcdf" stroke="none" /></Svg></IconButton>
          <IconButton aria-label="取消合并"><Svg w={14} h={14} stroke="#b5b6b9"><path d="M.5 .5h13v13H.5zM.5 3.500h13M.5 7h13M.5 10.500h13M5 .5v13M9 .5v13" /></Svg></IconButton>
          <Line $l={3} $r={2} />
          {INSERT.map(([name, icon]) => <IconButton key={name} aria-label={name}>{icon}</IconButton>)}
          <IconButton $w={32} aria-label="形状"><Svg w={22} h={15}><path d="M2.500 1.500h11v12h-11zM0 1.500h16M0 13.500h16M2.500 0v15M13.500 0v15" /><path d="M17 6h5l-2.500 4z" fill={INK} stroke="none" /></Svg></IconButton>
          <Line $l={3} />
        </FormatBar>

        <Ruler>
          <RulerScale>{Array.from({ length: 14 }, (_, i) => <RulerMark key={i}>{i * 100}</RulerMark>)}</RulerScale>
        </Ruler>
        <ParamPane>
          <SideRuler><span>0</span></SideRuler>
          <ParamCanvas>
            <ParamLabel htmlFor="from">开始时间</ParamLabel>
            <ParamInput id="from" $w={81} defaultValue="2015-12-01" />
            <CalendarButton $w={21} $h={21} aria-label="选择开始时间"><CalendarIcon /></CalendarButton>
            <ParamLabel htmlFor="to">结束时间</ParamLabel>
            <ParamInput id="to" $w={78} defaultValue="='2016-07-27'" />
            <CalendarButton $w={21} $h={21} aria-label="选择结束时间"><CalendarIcon /></CalendarButton>
            <QueryButton>
              查询
              <Svg w={34} h={31} stroke={INK}>
                <path d="M2 16C8 6 25 6 32 16 25 26 9 26 2 16z" strokeWidth="3" />
                <path d="M9 16a8 8 0 0115-6L12 22a8 8 0 01-3-6z" fill={INK} stroke="none" />
                <path d="M17 23a8 8 0 007-10z" fill={INK} stroke="none" />
                <path d="M2 30L31 1" strokeWidth="2.500" />
              </Svg>
            </QueryButton>
            <Pencil aria-label="编辑">
              <Svg w={31} h={31} stroke="none" fill={INK}>
                <path fillRule="evenodd" d="M0 31l2-10L19 4l8 8L10 29zM5 22l3 3L22 11l-2-2zM21 3l2-2c4-3 9 2 7 6l-2 3z" />
              </Svg>
            </Pencil>
          </ParamCanvas>
          <Handle />
        </ParamPane>
        <Divider />

        <SheetRow>
          <SheetView>
            <SheetTable />
            <PageBreak $x={614} />
            <PageBreak $x={1263} />
          </SheetView>
          <VScroll>
            <ScrollButton aria-label="向上"><Chevron d="M1 7l4-4 4 4" /></ScrollButton>
            <Thumb $grow={8} />
            <Space $grow={1} />
            <ScrollButton aria-label="向下"><Chevron /></ScrollButton>
          </VScroll>
        </SheetRow>
        <HScroll>
          <ScrollButton $size={13} aria-label="向左"><Chevron d="M7 1L3 5l4 4" /></ScrollButton>
          <Thumb $grow={94} />
          <Space $grow={6} />
          <ScrollButton aria-label="向右"><Chevron d="M3 1l4 4-4 4" /></ScrollButton>
        </HScroll>
      </Main>

      <Rail>
        <RailToggle aria-label="收起"><Triangle w={6} h={10} d="M0 0v10L6 5z" color="#999" /></RailToggle>
        {RAIL.map(([name, icon]) => <RailButton key={name} aria-label={name} $active={name === "条件属性"}>{icon}</RailButton>)}
      </Rail>
      <Props>
        <PropsTitle>条件属性</PropsTitle>
        <AddRow>添加条件<AddButton aria-label="添加条件" /></AddRow>
        <CondBox>
          <CondTools>
            <IconButton aria-label="复制"><Svg w={16} h={16} stroke="#888" fill="#a8a8a8"><path d="M.5 .5h6l2 2v9h-8z" /><path d="M6.500 4.500h6l3 3v8h-9z" /></Svg></IconButton>
            <IconButton aria-label="上移"><Svg w={10} h={13} stroke="#888"><path d="M5 13V2M1 6l4-4 4 4" strokeWidth="2" /></Svg></IconButton>
            <IconButton aria-label="下移"><Svg w={10} h={13} stroke="#888"><path d="M5 0v11M1 7l4 4 4-4" strokeWidth="2" /></Svg></IconButton>
          </CondTools>
        </CondBox>
      </Props>
      <FormulaDialog />
    </Page>
  );
}
